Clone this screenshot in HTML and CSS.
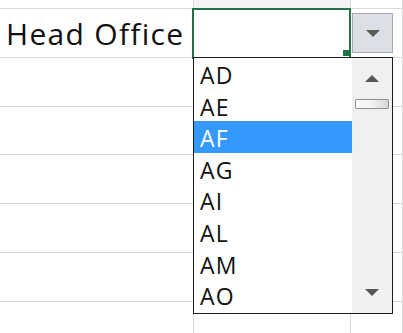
FILE: index.html
```html
<!DOCTYPE html>
<html lang="en">

<head>
    <meta charset="UTF-8">
    <meta name="viewport" content="width=device-width, initial-scale=1.0">
    <title>Head Office dropdown</title>
    <link rel="stylesheet" href="styles.css">
</head>

<body>
    <div class="sheet">
        <!-- row above -->
        <div class="cell"></div>
        <div class="cell cell-above"></div>
        <div class="cell"></div>

        <div class="cell label">Head Office</div>
        <div class="cell active">
            <button class="dd-btn">
                <svg width="14" height="8" viewBox="0 0 14 8"><polygon points="0,0 14,0 7,7" fill="#5a5a5a"/></svg>
            </button>
            <div class="dd-list">
                <ul class="dd-items">
                    <li>AD</li>
                    <li>AE</li>
                    <li class="selected">AF</li>
                    <li>AG</li>
                    <li>AI</li>
                    <li>AL</li>
                    <li>AM</li>
                    <li>AO</li>
                </ul>
                <div class="dd-scroll">
                    <div class="scroll-btn">
                        <svg width="14" height="8" viewBox="0 0 14 8"><polygon points="0,7 14,7 7,0" fill="#555"/></svg>
                    </div>
                    <div class="scroll-thumb"></div>
                    <div class="scroll-track"></div>
                    <div class="scroll-btn">
                        <svg width="14" height="8" viewBox="0 0 14 8"><polygon points="0,0 14,0 7,7" fill="#555"/></svg>
                    </div>
                </div>
            </div>
        </div>
        <div class="cell"></div>

        <div class="cell"></div><div class="cell"></div><div class="cell"></div>
        <div class="cell"></div><div class="cell"></div><div class="cell"></div>
        <div class="cell"></div><div class="cell"></div><div class="cell"></div>
        <div class="cell"></div><div class="cell"></div><div class="cell"></div>
        <div class="cell"></div><div class="cell"></div><div class="cell"></div>
        <div class="cell"></div><div class="cell"></div><div class="cell"></div>
    </div>
</body>

</html>
```

FILE: styles.css
```css
:root {
    --grid-color: #d9d9d9;
    --select-green: #217346;
    --highlight: #3399ff;
    --text-color: #111111;
}

* {
    margin: 0;
    padding: 0;
    box-sizing: border-box;
}

body {
    font-family: 'Open Sans', 'Noto Sans', sans-serif;
    background-color: #ffffff;
    color: var(--text-color);
}

.sheet {
    display: grid;
    grid-template-columns: 194px 157px 1fr;
    grid-template-rows: 9px repeat(7, 48.75px);
    width: 403px;
    height: 333px;
    overflow: hidden;
}

.cell {
    border-right: 1px solid var(--grid-color);
    border-bottom: 1px solid var(--grid-color);
}

.cell-above {
    background-color: #f3f3f3;
}

.label {
    display: flex;
    align-items: center;
    padding-left: 6px;
    padding-top: 1px;
    font-size: 30px;
    font-weight: 500;
    letter-spacing: 1.3px;
    white-space: nowrap;
}

.active {
    position: relative;
}

/* selection frame + fill handle */
.active::before {
    content: '';
    position: absolute;
    left: -2px;
    top: -1px;
    right: -1px;
    bottom: -2px;
    border: 2px solid var(--select-green);
}

.active::after {
    content: '';
    position: absolute;
    right: -1px;
    top: 41px;
    width: 8px;
    height: 6px;
    background-color: var(--select-green);
}

.dd-btn {
    position: absolute;
    left: 158px;
    top: 4px;
    width: 41px;
    height: 40px;
    border: 1px solid #a7aab0;
    background-color: #dcdfe5;
    display: flex;
    align-items: center;
    justify-content: center;
    padding-top: 1px;
}

.dd-list {
    position: absolute;
    left: -1px;
    top: 48px;
    width: 200px;
    height: 257px;
    border: 1px solid #1c1c1c;
    background-color: #ffffff;
    display: flex;
    z-index: 2;
}

.dd-items {
    list-style: none;
    width: 158px;
}

.dd-items li {
    height: 31.6px;
    line-height: 31.6px;
    padding-left: 6px;
    padding-top: 2px;
    font-size: 23px;
    font-weight: 500;
    letter-spacing: 1.2px;
}

.dd-items li.selected {
    background-color: var(--highlight);
    color: #ffffff;
}

.dd-scroll {
    flex: 1;
    background-color: #f0f0f0;
    display: flex;
    flex-direction: column;
    align-items: center;
}

.scroll-btn {
    height: 41px;
    width: 100%;
    display: flex;
    align-items: center;
    justify-content: center;
}

.scroll-thumb {
    width: 34px;
    height: 10px;
    border: 1px solid #8f8f8f;
    border-radius: 2px;
    background: linear-gradient(to right, #fafafa 0%, #f2f2f2 50%, #d8d8d8 100%);
}

.scroll-track {
    flex: 1;
}
```
